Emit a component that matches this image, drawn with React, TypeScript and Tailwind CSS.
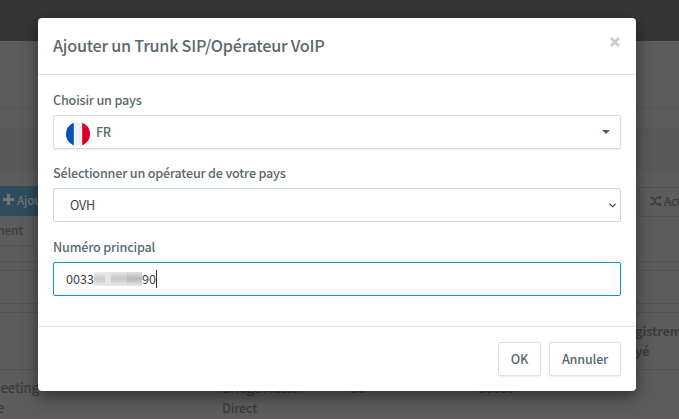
import React from 'react';

function Label({ children }: { children: React.ReactNode }) {
  return <label className="block h-5 text-[12.6px] leading-5 font-medium tracking-[-0.19px] text-[#5a6971]">{children}</label>;
}

function PageBehind() {
  return (
    <div aria-hidden className="flex h-full flex-col bg-[#5c5c5c] text-[12.6px] text-[#3b3b3b]">
      <div className="h-[41px] shrink-0 bg-[#353535]" />
      <div className="h-[68px] shrink-0 border-b border-[#555]" />
      <div className="h-[21px] shrink-0 border-b border-[#555]" />
      <div className="h-[41px] shrink-0 bg-[#595959]" />
      <div className="flex h-[91px] shrink-0 justify-between border-b border-[#525252] pt-[15px]">
        <div className="w-[60px]">
          <div className="flex h-[30px] items-center bg-[#2e4c5b] pl-[3px] text-[11.6px] font-medium tracking-[-0.2px] text-[#737373]">
            <svg className="mr-[3px] -mt-[3px] h-[11px] w-[11px] shrink-0" viewBox="0 0 11 11" fill="currentColor"><path d="M4 0h3v4h4v3H7v4H4V7H0V4h4z" /></svg>
            <span>Ajouter</span>
          </div>
          <div className="flex h-[30px] w-[34px] justify-end border-r border-b border-[#535353] pr-[10px] text-[11.6px] leading-[29px] font-medium whitespace-nowrap">
            ment
          </div>
        </div>
        <div className="mt-px flex h-[30px] w-[40px] items-center overflow-hidden rounded-l-[2px] border border-r-0 border-[#525252] pl-[10px] text-[11.6px] font-medium tracking-[-0.3px]">
          <svg className="mr-[2px] -mt-[3px] h-[12px] w-[12px] shrink-0" viewBox="0 0 12 12" fill="none" stroke="currentColor" strokeWidth="1.7"><path d="M0 2.5h2c3 0 3 7 6 7h2M0 9.5h2c1.1 0 1.8-1 2.4-2M5.5 4.5c.6-1.2 1.3-2 2.5-2h2" /><path d="M9 0l3 2.5L9 5zM9 7l3 2.5L9 12z" fill="currentColor" stroke="none" /></svg>
          <span>Act</span>
        </div>
      </div>
      <div className="h-[9px] shrink-0 border-b border-[#525252]" />
      <div className="h-[33px] shrink-0 border-b border-[#525252]" />
      <div className="h-[9px] shrink-0 border-b border-[#525252]" />
      <div className="flex h-[57px] shrink-0 justify-end overflow-hidden border-b border-[#545454] pt-[8px] leading-5 font-bold tracking-[-0.1px]">
        <div className="w-[44px] whitespace-nowrap"><div>gistrem</div><div>yé</div></div>
      </div>
      <div className="flex min-h-0 grow pt-[8px] leading-5 font-medium tracking-[-0.15px]">
        <div className="flex w-[222px] flex-col items-start">
          <div className="-ml-[10px] text-[13px]">Meeting</div>
          <div className="-ml-[3px] text-[13px]">e</div>
        </div>
        <div className="w-[129px]"><div>Bridge Master</div><div>Direct</div></div>
        <div className="w-[128px]">30</div>
        <div>30000</div>
      </div>
      <div className="h-px shrink-0 bg-[#665d60]" />
    </div>
  );
}

function Dialog() {
  return (
    <div role="dialog" className="absolute top-[18px] left-[38px] flex h-[373px] w-[598px] flex-col rounded-[4px] bg-white shadow-[0_5px_15px_rgba(0,0,0,0.5)]">
      <header className="flex h-[57px] shrink-0 items-start justify-between border-b border-[#e5e5e5] px-[15px]">
        <h4 className="pt-[14px] text-[16.2px] leading-[26px] font-medium tracking-[-0.25px] text-[#5a6971]">Ajouter un Trunk SIP/Opérateur VoIP</h4>
        <button className="mt-[19px] mr-px">
          <svg className="h-[10px] w-[10px]" viewBox="0 0 10 10" stroke="#cccccc" strokeWidth="2.8"><path d="M1 1l8 8M9 1l-8 8" /></svg>
        </button>
      </header>
      <main className="flex h-[251px] shrink-0 flex-col px-[15px] pt-[15px]">
        <Label>Choisir un pays</Label>
        <div className="mt-[5px] flex h-[34px] items-center rounded-[2px] border border-[#d7e0e0] pr-[10px] pl-3 text-[12.6px] text-[#5a6971] shadow-[0_1px_2px_rgba(0,0,0,0.08)]">
          <svg className="mt-[3px] mr-[6px] h-6 w-6" viewBox="0 0 24 24">
            <clipPath id="round"><circle cx="12" cy="12" r="12" /></clipPath>
            <g clipPath="url(#round)"><path fill="#f0f0f0" d="M0 0h24v24H0z" /><path fill="#0052b4" d="M0 0h7.8v24H0z" /><path fill="#d80027" d="M16.2 0H24v24h-7.8z" /></g>
          </svg>
          <span className="font-medium tracking-[-0.5px]">FR</span>
          <svg className="ml-auto h-1 w-2" viewBox="0 0 8 4"><path fill="#526069" d="M0 0h8L4 4z" /></svg>
        </div>
        <div className="mt-[14px]"><Label>Sélectionner un opérateur de votre pays</Label></div>
        <div className="mt-[5px] flex h-[34px] items-center justify-between rounded-[2px] border border-[#cbd8da] pr-[4px] pl-4 text-[12.6px] text-[#444]">
          <span className="tracking-[-0.2px]">OVH</span>
          <svg className="mt-px h-[5px] w-[7px]" viewBox="0 0 8 5" fill="none" stroke="#444" strokeWidth="1.3"><path d="M.5.5L4 4 7.5.5" /></svg>
        </div>
        <div className="mt-[15px]"><Label>Numéro principal</Label></div>
        <div className="mt-[5px] flex h-[34px] shrink-0 items-center rounded-[2px] border border-[#0d94d1] pl-3 text-[12.6px] text-[#444]">
          <span>0033</span>
          <span className="flex h-[14px] w-[48px]">
            <span className="w-[11px] bg-gradient-to-b from-[#ededed] via-[#c9c9c9] to-[#eeeeee]" />
            <span className="w-[6px] bg-[#e5e5e5]" />
            <span className="w-[16px] bg-gradient-to-b from-[#e5e5e5] via-[#c8c8c8] to-[#ebebeb]" />
            <span className="w-[15px] bg-gradient-to-b from-[#e0e0e0] via-[#b8b8b8] to-[#e8e8e8]" />
          </span>
          <span>90</span>
          <span className="h-[18px] w-px bg-[#333]" />
        </div>
      </main>
      <footer className="flex grow justify-end gap-2 border-t border-[#e5e5e5] px-[15px] pt-[15px] text-[12.6px] font-medium tracking-[-0.19px] text-[#5a6971]">
        <button className="h-[34px] w-[43px] rounded-[2px] border border-[#d7e3e3] shadow-[0_1px_2px_rgba(0,0,0,0.06)]">OK</button>
        <button className="h-[34px] w-[72px] rounded-[2px] border border-[#d7e3e3] shadow-[0_1px_2px_rgba(0,0,0,0.06)]">Annuler</button>
      </footer>
    </div>
  );
}

export default function App() {
  return (
    <div className="relative h-[419px] w-[679px] overflow-hidden font-['Noto_Sans_CJK_SC','Noto_Sans',sans-serif]">
      <PageBehind />
      <Dialog />
    </div>
  );
}
